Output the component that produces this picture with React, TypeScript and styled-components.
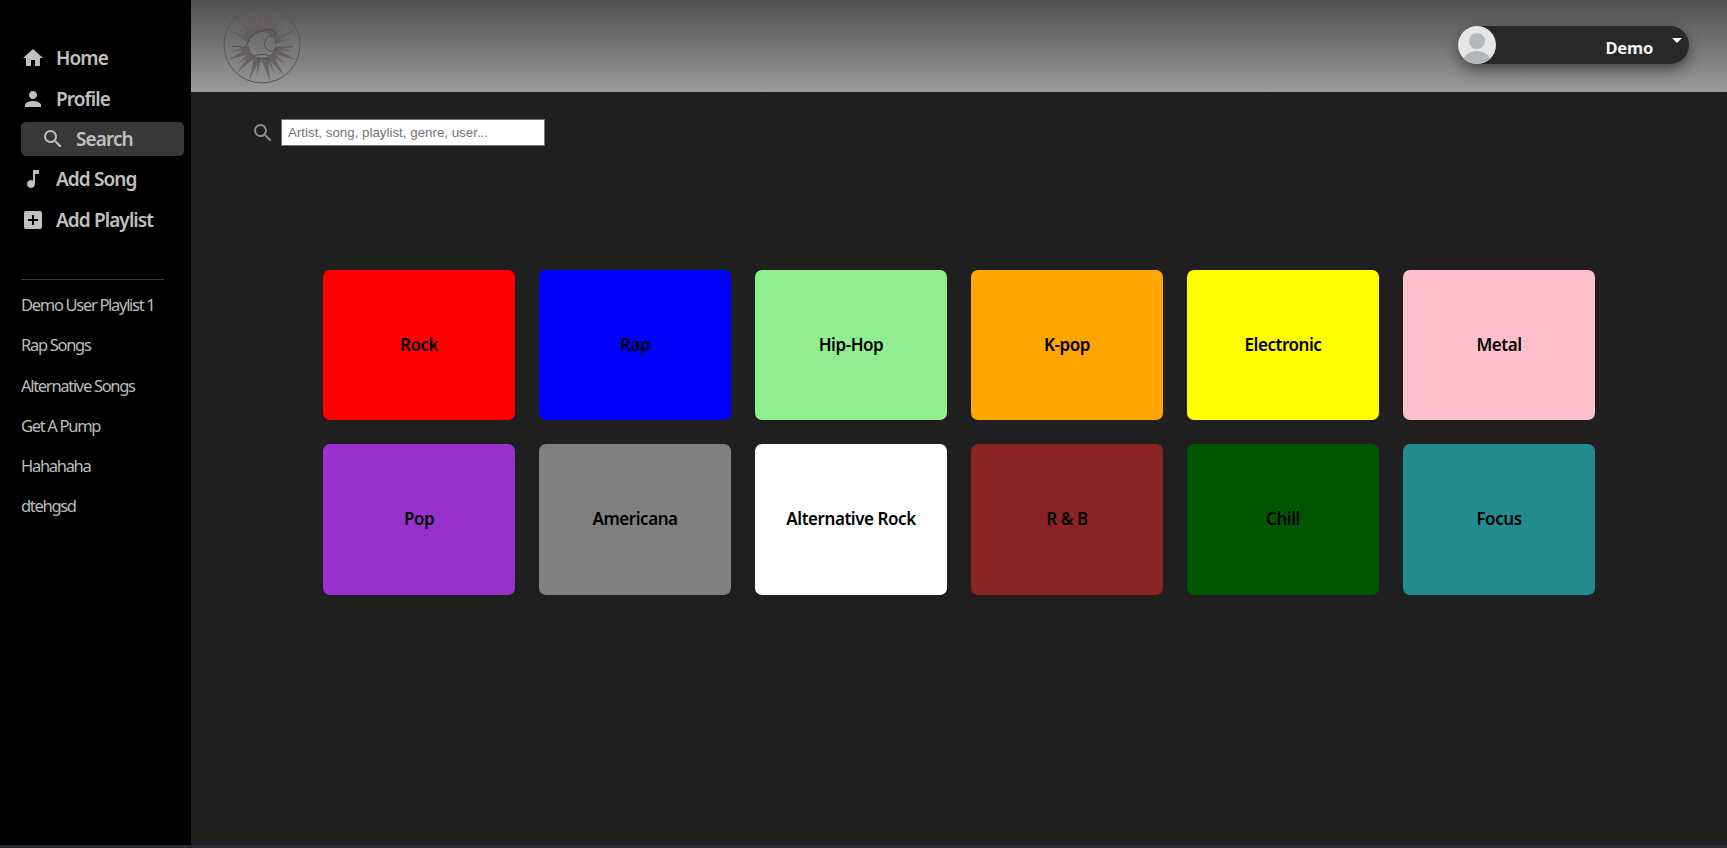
import React from 'react';
import styled, { createGlobalStyle } from 'styled-components';
import { MdHome, MdPerson, MdSearch, MdMusicNote, MdAddBox } from 'react-icons/md';

const GlobalStyle = createGlobalStyle`
  html, body {
    margin: 0;
    padding: 0;
    height: 100%;
    overflow: hidden;
    background: #282c34;
    font-family: 'Noto Sans', 'Open Sans', sans-serif;
  }
`;

const Page = styled.div`
  display: grid;
  grid-template-columns: 191px 1fr;
  height: 845px;
`;

const Sidebar = styled.nav`
  background: #000;
  padding: 38px 7px 0 21px;
  display: flex;
  flex-direction: column;
`;

const NavItem = styled.a<{ $active?: boolean }>`
  display: flex;
  align-items: center;
  height: ${(props) => (props.$active ? '34px' : '40.4px')};
  margin: ${(props) => (props.$active ? '3.2px 0' : '0')};
  padding-left: ${(props) => (props.$active ? '21px' : '0')};
  border-radius: 5px;
  background: ${(props) => (props.$active ? '#383838' : 'transparent')};
  color: #c0c0c0;
  font-size: 19px;
  font-weight: 600;
  letter-spacing: -0.9px;
  svg {
    width: 24px;
    height: 24px;
    margin-right: 11px;
    margin-left: ${(props) => (props.$active ? '-1px' : '0')};
    flex: none;
  }
`;

const Divider = styled.hr`
  border: 0;
  border-top: 1px solid #3c3c3c;
  margin: 39px 20px 0 0;
`;

const PlaylistList = styled.ul`
  list-style: none;
  margin: 5px 0 0;
  padding: 0;
`;

const PlaylistRow = styled.li`
  height: 40.3px;
  line-height: 40.3px;
  color: #bdbdbd;
  font-size: 16.5px;
  letter-spacing: -1.3px;
  white-space: nowrap;
`;

const Main = styled.main`
  background: #1f1f1f;
  display: flex;
  flex-direction: column;
  min-width: 0;
`;

const TopBar = styled.header`
  height: 92px;
  box-sizing: border-box;
  flex: none;
  background: linear-gradient(#505050, #9a9a9a);
  display: flex;
  align-items: center;
  justify-content: space-between;
  padding: 0 38px 2px 32px;
`;

const UserPill = styled.div`
  width: 231px;
  height: 38px;
  border-radius: 19px;
  background: #282828;
  box-shadow: 0 6px 14px rgba(0, 0, 0, 0.45);
  display: flex;
  align-items: center;
  color: #f2f2f2;
`;

const UserName = styled.span`
  margin-left: auto;
  padding-top: 4px;
  font-size: 16.5px;
  font-weight: 700;
  letter-spacing: -0.2px;
`;

const Caret = styled.span`
  width: 0;
  height: 0;
  margin: -10px 7px 0 19px;
  border-left: 5px solid transparent;
  border-right: 5px solid transparent;
  border-top: 5px solid #f5f5f5;
`;

const SearchRow = styled.div`
  display: flex;
  align-items: center;
  padding: 27px 0 0 60px;
`;

const SearchGlyph = styled(MdSearch)`
  width: 24px;
  height: 24px;
  color: #8e8e8e;
  margin-right: 6px;
`;

const SearchInput = styled.input`
  width: 264px;
  height: 27px;
  box-sizing: border-box;
  border: 1px solid #767676;
  background: #fff;
  padding: 0 6px;
  font-family: 'Liberation Sans', Arial, sans-serif;
  font-size: 13.33px;
  &::placeholder {
    color: #757575;
    opacity: 1;
  }
`;

const GenreGrid = styled.section`
  display: grid;
  grid-template-columns: repeat(6, 192px);
  grid-template-rows: 150px 151px;
  gap: 24px;
  padding: 124px 0 0 132px;
`;

const GenreCard = styled.div<{ $color: string }>`
  background: ${(props) => props.$color};
  border-radius: 7px;
  display: flex;
  align-items: center;
  justify-content: center;
  padding-bottom: 2px;
  color: #000;
  font-size: 17px;
  font-weight: 600;
  letter-spacing: -0.45px;
`;

const genres = [
  { name: 'Rock', color: '#ff0000' },
  { name: 'Rap', color: '#0000ff' },
  { name: 'Hip-Hop', color: '#90ee90' },
  { name: 'K-pop', color: '#ffa500' },
  { name: 'Electronic', color: '#ffff00' },
  { name: 'Metal', color: '#ffc0cb' },
  { name: 'Pop', color: '#9932cc' },
  { name: 'Americana', color: '#808080' },
  { name: 'Alternative Rock', color: '#ffffff' },
  { name: 'R & B', color: '#8b2323' },
  { name: 'Chill', color: '#005500' },
  { name: 'Focus', color: '#228b8f' },
];

const playlists = ['Demo User Playlist 1', 'Rap Songs', 'Alternative Songs', 'Get A Pump', 'Hahahaha', 'dtehgsd'];

function Logo() {
  // two fans of spikes, top and bottom, the wave runs through the gap between them
  const long = [-66, -42, -20, 12, 36, 66, 114, 144, 168, 200, 222, 246];
  const short = [-54, -31, -6, 24, 50, 78, 102, 130, 156, 190, 232, 258];
  return (
    <svg width="78" height="78" viewBox="-39 -39 78 78" fill="none">
      <circle r="38" stroke="#555" strokeWidth="1" />
      {long.map((angle) => (
        <polygon key={angle} points="-4,-13 -2,-22 0,-37 2,-22 4,-13" fill="#645a5e" opacity="0.85" transform={`rotate(${angle})`} />
      ))}
      {short.map((angle) => (
        <polygon key={angle} points="-2,-13 0,-31 2,-13" fill="#5e5e5e" opacity="0.8" transform={`rotate(${angle})`} />
      ))}
      <path
        d="M-30 1c4 2 6-1 9 1 3 3 6-1 7-5 2-6 6-8 11-10 5-2 10-3 15-2l2 4c-3 3-7 1-10 5-3 5-1 11 4 12 4 1 7-2 9-4 4 1 9-1 14 0"
        stroke="#444"
        strokeWidth="0.8"
      />
      <path d="M-8 11c5-2 11-2 16 0M-6 14c4-1 8-1 12 0" stroke="#4a4a4a" strokeWidth="0.8" />
    </svg>
  );
}

function Avatar() {
  return (
    <svg width="38" height="38" viewBox="0 0 38 38">
      <defs>
        <clipPath id="avatar-clip">
          <circle cx="19" cy="19" r="19" />
        </clipPath>
      </defs>
      <g clipPath="url(#avatar-clip)">
        <rect width="38" height="38" fill="#e4e6e8" />
        <circle cx="19" cy="15" r="8" fill="#b4b8bc" />
        <ellipse cx="19" cy="36" rx="14" ry="11" fill="#b4b8bc" />
      </g>
    </svg>
  );
}

export default function App() {
  return (
    <Page>
      <GlobalStyle />
      <Sidebar>
        <NavItem><MdHome />Home</NavItem>
        <NavItem><MdPerson />Profile</NavItem>
        <NavItem $active><MdSearch />Search</NavItem>
        <NavItem><MdMusicNote />Add Song</NavItem>
        <NavItem><MdAddBox />Add Playlist</NavItem>
        <Divider />
        <PlaylistList>
          {playlists.map((name) => (
            <PlaylistRow key={name}>{name}</PlaylistRow>
          ))}
        </PlaylistList>
      </Sidebar>
      <Main>
        <TopBar>
          <Logo />
          <UserPill>
            <Avatar />
            <UserName>Demo</UserName>
            <Caret />
          </UserPill>
        </TopBar>
        <SearchRow>
          <SearchGlyph />
          <SearchInput placeholder="Artist, song, playlist, genre, user..." />
        </SearchRow>
        <GenreGrid>
          {genres.map((genre) => (
            <GenreCard key={genre.name} $color={genre.color}>{genre.name}</GenreCard>
          ))}
        </GenreGrid>
      </Main>
    </Page>
  );
}
